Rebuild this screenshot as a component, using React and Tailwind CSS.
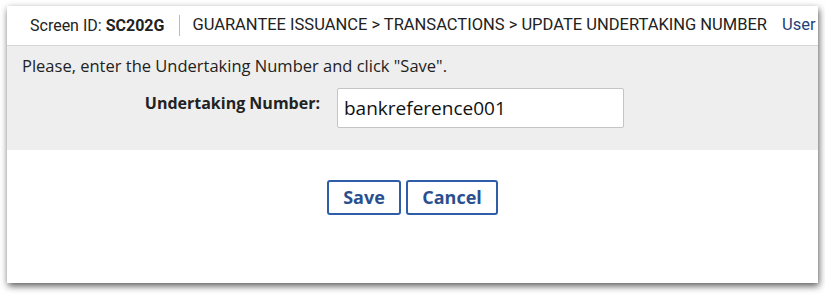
import React from "react";

export default function App() {
  return (
    <div className="w-[825px] h-[294px] bg-white pt-[6px] pl-[7px] overflow-hidden">
      <div className="w-[811px] h-[277px] bg-white shadow-[1px_3px_7px_rgba(0,0,0,0.65)] overflow-hidden flex flex-col">
        {/* header */}
        <div className="h-[40px] shrink-0 flex items-center pl-[23px] border-b border-[#d6d6d6] whitespace-nowrap text-[#222]" style={{ fontFamily: "Roboto, 'Liberation Sans', sans-serif" }}>
          <span className="text-[16px]">Screen ID: <span className="font-bold">SC202G</span></span>
          <span className="ml-[15px] mr-[12px] w-[1px] h-[21px] bg-[#bbbbbb]"></span>
          <span className="text-[16.5px]">GUARANTEE ISSUANCE &gt; TRANSACTIONS &gt; UPDATE UNDERTAKING NUMBER</span>
          <span className="ml-[15px] text-[16.5px] text-[#1e3f78]">User</span>
        </div>
        {/* gray section */}
        <div className="h-[104px] shrink-0 bg-[#eeeeee] pt-[9px]" style={{ fontFamily: "'Open Sans', 'Liberation Sans', sans-serif" }}>
          <div className="pl-[15px] text-[16.5px] leading-[22px] text-[#222] whitespace-nowrap">Please, enter the Undertaking Number and click "Save".</div>
          <div className="flex items-start mt-[11px]">
            <div className="w-[313px] text-right text-[16px] font-bold leading-[22px] text-[#222] pt-[4px] whitespace-nowrap">Undertaking Number:</div>
            <div className="ml-[17px] w-[287px] h-[40px] bg-white border border-[#c4c4c4] rounded-[2px] flex items-center pl-[6px] text-[19px] text-[#111]">bankreference001</div>
          </div>
        </div>
        {/* buttons */}
        <div className="flex pt-[30px] pl-[320px] gap-[5px]" style={{ fontFamily: "'Open Sans', 'Liberation Sans', sans-serif" }}>
          <button className="w-[74px] h-[35px] border-2 border-[#2f5ea8] rounded-[3px] text-[18px] font-bold text-[#2a4f8e] bg-white">Save</button>
          <button className="w-[92px] h-[35px] border-2 border-[#2f5ea8] rounded-[3px] text-[18px] font-bold text-[#2a4f8e] bg-white">Cancel</button>
        </div>
      </div>
    </div>
  );
}
